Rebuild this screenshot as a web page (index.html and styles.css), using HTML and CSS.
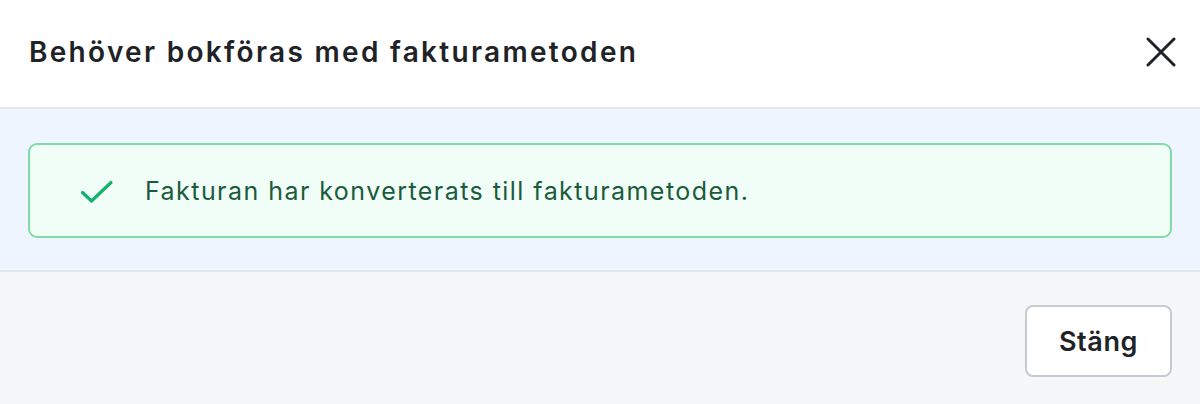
FILE: index.html
```html
<!DOCTYPE html>
<html lang="sv">
<head>
<meta charset="utf-8">
<link rel="stylesheet" href="styles.css">
</head>
<body>
<div class="modal">
  <header class="modal-header">
    <h1 class="modal-title">Behöver bokföras med fakturametoden</h1>
    <button class="close-btn" aria-label="Stäng">
      <svg width="30" height="30" viewBox="0 0 30 30"><path d="M2 2 L28 28 M28 2 L2 28" stroke="#1f2328" stroke-width="3" stroke-linecap="round" fill="none"/></svg>
    </button>
  </header>
  <section class="modal-body">
    <div class="alert">
      <svg class="check" width="34" height="24" viewBox="0 0 34 24"><path d="M2.5 12.5 L11.5 21 L31 2.5" stroke="#13b26f" stroke-width="3.2" stroke-linecap="round" stroke-linejoin="round" fill="none"/></svg>
      <span class="alert-text">Fakturan har konverterats till fakturametoden.</span>
    </div>
  </section>
  <footer class="modal-footer">
    <button class="btn">Stäng</button>
  </footer>
</div>
</body>
</html>
```
FILE: styles.css
```css
html, body {
  margin: 0;
  padding: 0;
  background: #ffffff;
}
body {
  font-family: Inter, "Noto Sans", sans-serif;
  width: 1200px;
  height: 404px;
  overflow: hidden;
}
.modal {
  display: flex;
  flex-direction: column;
  height: 404px;
}
.modal-header {
  height: 109px;
  box-sizing: border-box;
  display: flex;
  align-items: center;
  justify-content: space-between;
  padding: 0 24px 4px 29px;
  border-bottom: 2px solid #e3e6ea;
  background: #fff;
}
.modal-title {
  margin: 0;
  font-size: 28px;
  font-weight: 600;
  color: #1f2328;
  letter-spacing: 2.3px;
}
.close-btn {
  border: 0;
  background: none;
  padding: 0;
  width: 30px;
  height: 30px;
  display: flex;
  cursor: pointer;
}
.modal-body {
  background: #eef5fe;
  padding: 34px 28px 32px 28px;
}
.alert {
  height: 95px;
  box-sizing: border-box;
  border: 2px solid #7fdca6;
  border-radius: 9px;
  background: #f1fdf7;
  display: flex;
  align-items: center;
  padding-left: 50px;
  gap: 31px;
}
.check {
  margin-top: 2px;
}
.alert-text {
  font-size: 25px;
  color: #1a5b3c;
  letter-spacing: 1.45px;
}
.modal-footer {
  flex: 1;
  background: #f6f7f9;
  border-top: 2px solid #e3e6ea;
  display: flex;
  justify-content: flex-end;
  align-items: flex-start;
  padding: 33px 28px 0 0;
}
.btn {
  width: 147px;
  height: 72px;
  box-sizing: border-box;
  border: 2px solid #c6cbd1;
  border-radius: 8px;
  background: #fff;
  font-family: Inter, "Noto Sans", sans-serif;
  font-size: 27px;
  font-weight: 600;
  color: #1f2328;
  letter-spacing: 0.6px;
  cursor: pointer;
}
```
